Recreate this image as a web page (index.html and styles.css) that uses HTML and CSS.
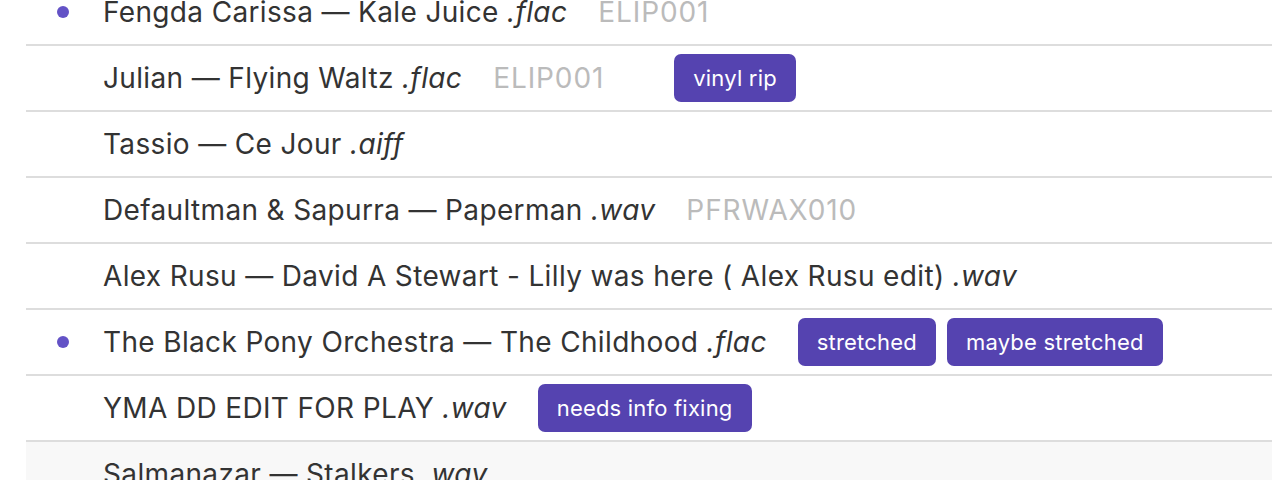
FILE: index.html
```html
<!DOCTYPE html>
<html>
<head>
<meta charset="utf-8">
<link rel="stylesheet" href="styles.css">
</head>
<body>
<ul class="tracks">
  <li class="track">
    <span class="dot"></span>
    <span class="title">Fengda Carissa — Kale Juice <em>.flac</em></span>
    <span class="catalog">ELIP001</span>
  </li>
  <li class="track">
    <span class="nodot"></span>
    <span class="title">Julian — Flying Waltz <em>.flac</em></span>
    <span class="catalog">ELIP001</span>
    <span class="tags"><span class="tag">vinyl rip</span></span>
  </li>
  <li class="track">
    <span class="nodot"></span>
    <span class="title">Tassio — Ce Jour <em>.aiff</em></span>
  </li>
  <li class="track">
    <span class="nodot"></span>
    <span class="title">Defaultman &amp; Sapurra — Paperman <em>.wav</em></span>
    <span class="catalog">PFRWAX010</span>
  </li>
  <li class="track">
    <span class="nodot"></span>
    <span class="title">Alex Rusu — David A Stewart - Lilly was here ( Alex Rusu edit) <em>.wav</em></span>
  </li>
  <li class="track">
    <span class="dot"></span>
    <span class="title">The Black Pony Orchestra — The Childhood <em>.flac</em></span>
    <span class="tags"><span class="tag">stretched</span><span class="tag">maybe stretched</span></span>
  </li>
  <li class="track">
    <span class="nodot"></span>
    <span class="title">YMA DD EDIT FOR PLAY <em>.wav</em></span>
    <span class="tags"><span class="tag">needs info fixing</span></span>
  </li>
  <li class="track hover">
    <span class="nodot"></span>
    <span class="title">Salmanazar — Stalkers <em>.wav</em></span>
  </li>
</ul>
</body>
</html>
```
FILE: styles.css
```css
html, body {
  margin: 0;
  padding: 0;
  background: #ffffff;
  overflow: hidden;
}

body {
  font-family: Inter, "Noto Sans", sans-serif;
  color: #333333;
}

.tracks {
  list-style: none;
  margin: -20px 0 0 26px;
  padding: 0;
}

.track {
  display: flex;
  align-items: center;
  height: 64px;
  padding-left: 31px;
  border-bottom: 2px solid #dddddd;
  white-space: nowrap;
}

.track.hover {
  background: #f8f8f8;
}

.dot, .nodot {
  flex: none;
  width: 12px;
  height: 12px;
  margin-right: 34px;
  border-radius: 50%;
}

.dot {
  background: #6352c6;
}

.title {
  font-size: 28px;
  letter-spacing: 0.35px;
}

.title em {
  font-style: italic;
}

.catalog {
  margin-left: 31px;
  margin-right: 40px;
  font-size: 28px;
  color: #bbbbbb;
  letter-spacing: 0.9px;
}

.tags {
  display: flex;
  gap: 11px;
  margin-left: 31px;
}

.catalog + .tags {
  margin-left: 30px;
}

.tag {
  display: inline-flex;
  align-items: center;
  height: 48px;
  padding: 0 19px;
  border-radius: 7px;
  background: #5543b0;
  color: #ffffff;
  font-size: 22px;
  letter-spacing: 0.2px;
}
```
